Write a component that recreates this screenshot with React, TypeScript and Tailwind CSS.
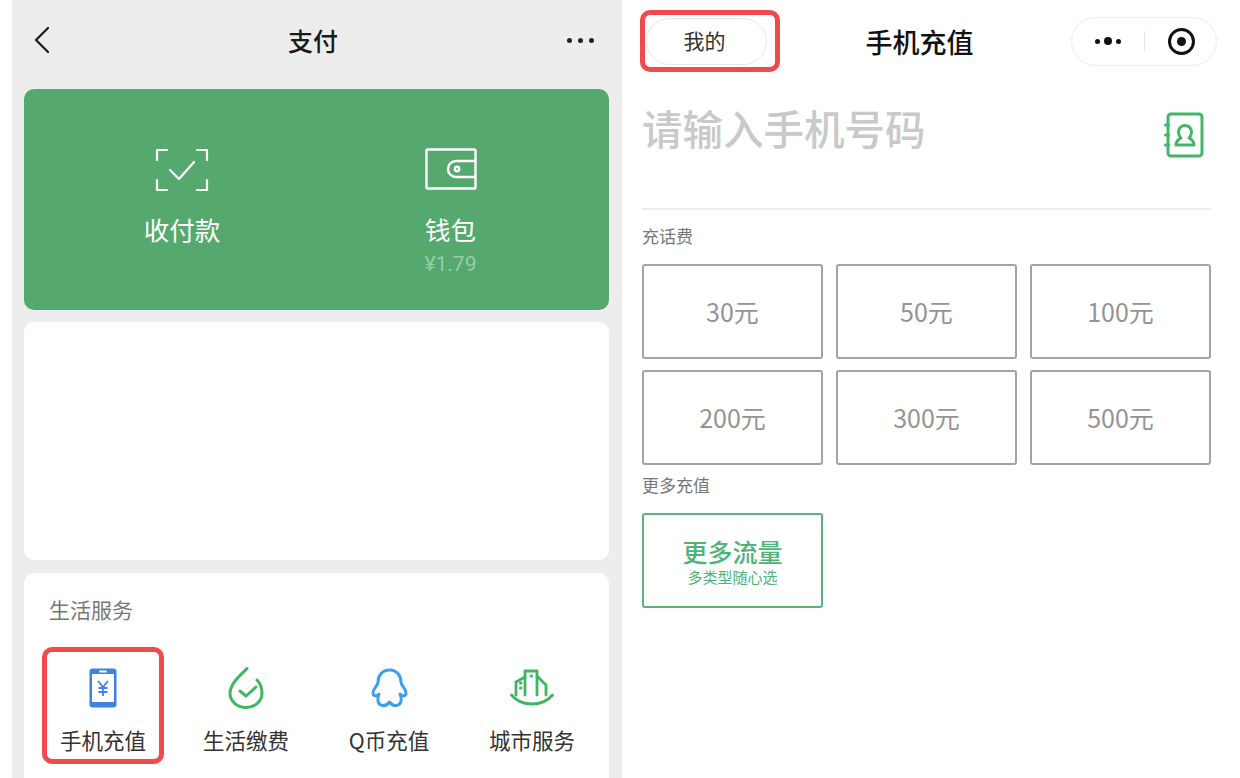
import type { ReactNode } from 'react';

const amounts = ['30元', '50元', '100元', '200元', '300元', '500元'];

function ScanIcon() {
  return (
    <svg width="54" height="44" viewBox="0 0 54 44" fill="none" stroke="#fff" strokeWidth="2.2" strokeLinecap="round" strokeLinejoin="round">
      <path d="M12 2H2v10M42 2h10v10M2 32v10h10M52 32v10H42" />
      <path d="M15 22l9 9 15-17" />
    </svg>
  );
}

function WalletIcon() {
  return (
    <svg width="52" height="42" viewBox="0 0 52 42" fill="none" stroke="#fff" strokeWidth="2.4" strokeLinejoin="round">
      <rect x="1.5" y="1.5" width="49" height="39" rx="1" />
      <path d="M50 13H31a8 8 0 0 0 0 16h19" />
      <circle cx="32" cy="21" r="2.2" />
    </svg>
  );
}

function PhoneIcon() {
  return (
    <svg width="28" height="40" viewBox="0 0 28 40">
      <rect x="0.5" y="0.5" width="27" height="39" rx="3" fill="#3f82e0" />
      <rect x="3" y="6" width="22" height="28" fill="#fff" />
      <rect x="10" y="2.500" width="8" height="2" rx="1" fill="#fff" />
      <path d="M9 13l5 6 5-6M14 19v9M9.500 20h9M9.500 24h9" fill="none" stroke="#3f82e0" strokeWidth="1.8" />
    </svg>
  );
}

function BillIcon() {
  return (
    <svg width="36" height="42" viewBox="0 0 36 42" fill="none" stroke="#3fb565" strokeWidth="3" strokeLinecap="round" strokeLinejoin="round">
      <path d="M19 1.500C13 8 2 16 2 26.500a16 14 0 0 0 32 0C34 21 32 16 29 13" />
      <path d="M12 24l6 5 10-9" />
    </svg>
  );
}

function PenguinIcon() {
  return (
    <svg width="37" height="40" viewBox="0 0 37 40" fill="none" stroke="#3f9fec" strokeWidth="3" strokeLinecap="round" strokeLinejoin="round">
      <path d="M18.500 2C11 2 7 8 7 14c0 4-5 6-5 11 0 3 3 4 6 1-2 4-2 11 4 11.500 3 .5 5-1.500 6.500-3.500 1.500 2 3.500 4 6.500 3.500C31 37 31 30 29 26c3 3 6 2 6-1 0-5-5-7-5-11 0-6-4-12-11.500-12z" />
    </svg>
  );
}

function CityIcon() {
  return (
    <svg width="44" height="38" viewBox="0 0 44 38" fill="none" stroke="#3fb565" strokeWidth="2.800" strokeLinecap="round" strokeLinejoin="round">
      <path d="M1.500 26c5 6 12 9 20.500 9s15.500-3 20.500-9" />
      <path d="M6 26V13l9-5v18" />
      <path d="M15 9V2h12v24" />
      <path d="M27 7l9 9v10" />
      <path d="M10.500 14h.5M10.500 19h.5M21 7h.5" strokeWidth="3" />
    </svg>
  );
}

function ContactsIcon() {
  return (
    <svg width="40" height="46" viewBox="0 0 40 46" fill="none" stroke="#46b56c" strokeWidth="3" strokeLinecap="round" strokeLinejoin="round">
      <rect x="4" y="2" width="34" height="42" rx="3" />
      <path d="M1.500 13h3M1.500 23h3M1.500 33h3" />
      <path d="M12 33c0-4 3-6 5-7-2-2-2.500-4-2.500-6a6.500 6.500 0 0 1 13 0c0 2-.5 4-2.500 6 2 1 5 3 5 7z" />
    </svg>
  );
}

function ServiceItem({ icon, label, highlighted }: { icon: ReactNode; label: string; highlighted?: boolean }) {
  return (
    <div
      className={`flex h-[117px] w-[122px] shrink-0 flex-col items-center rounded-[10px] border-[5px] pt-[15px] ${
        highlighted ? 'border-[#ef4a4e]' : 'border-transparent'
      }`}
    >
      <div className="flex h-[42px] items-center">{icon}</div>
      <div className="mt-[16px] text-[21.500px] leading-[30px] text-[#333]">{label}</div>
    </div>
  );
}

export default function App() {
  return (
    <div className="flex h-[778px] w-[1240px] overflow-hidden bg-white font-['Noto_Sans_CJK_SC',sans-serif]">
      {/* left screenshot */}
      <div className="ml-3 flex w-[609px] shrink-0 flex-col bg-[#ededed] px-3">
        <div className="grid h-[89px] shrink-0 grid-cols-[1fr_auto_1fr] items-center pb-[9px] pl-[10px] pr-[17px]">
          <svg width="16" height="28" viewBox="0 0 16 28" fill="none" stroke="#222" strokeWidth="2.4" strokeLinecap="round" strokeLinejoin="round">
            <path d="M14 2L2 14l12 12" />
          </svg>
          <span className="text-[25px] font-medium leading-none text-[#1a1a1a]">支付</span>
          <div className="-mr-[2px] flex justify-end gap-[6px]">
            <i className="h-[5px] w-[5px] rounded-full bg-[#222]" />
            <i className="h-[5px] w-[5px] rounded-full bg-[#222]" />
            <i className="h-[5px] w-[5px] rounded-full bg-[#222]" />
          </div>
        </div>

        <div className="grid h-[221px] w-[585px] shrink-0 grid-cols-2 rounded-[10px] bg-[#56a96e] pl-6 pr-[25px] pt-[59px] text-white">
          <div className="flex flex-col items-center">
            <ScanIcon />
            <div className="mt-[19px] text-[25.500px] leading-[36px]">收付款</div>
          </div>
          <div className="flex flex-col items-center pl-px">
            <WalletIcon />
            <div className="mt-[21px] text-[25.500px] leading-[36px]">钱包</div>
            <div className="mt-[3px] font-['Roboto',sans-serif] text-[21px] leading-[28px] text-[#96cda6]">¥1.79</div>
          </div>
        </div>

        <div className="mt-3 h-[238px] w-[585px] shrink-0 rounded-[10px] bg-white" />

        <div className="mt-[13px] h-[230px] w-[585px] shrink-0 rounded-t-[10px] bg-white pl-[18px] pt-[21px]">
          <div className="pl-[7px] text-[21px] leading-[30px] text-[#777]">生活服务</div>
          <div className="mt-[23px] flex gap-[21px]">
            <ServiceItem icon={<PhoneIcon />} label="手机充值" highlighted />
            <ServiceItem icon={<BillIcon />} label="生活缴费" />
            <ServiceItem icon={<PenguinIcon />} label="Q币充值" />
            <ServiceItem icon={<CityIcon />} label="城市服务" />
          </div>
        </div>
      </div>

      {/* right screenshot */}
      <div className="flex min-w-0 flex-1 flex-col border-l border-[#ececec] pl-5 pr-[29px]">
        <div className="mt-[10px] flex h-[62px] shrink-0 items-center justify-between">
          <div className="-ml-[2px] flex h-[62px] w-[140px] items-center rounded-[10px] border-[5px] border-[#ef4a4e] pl-px">
            <div className="flex h-[47px] w-[121px] shrink-0 items-center justify-center rounded-full border border-[#e6e6e6] pr-1 text-[21px] text-[#333]">
              我的
            </div>
          </div>
          <span className="mr-3 text-[27px] font-medium leading-none text-[#111]">手机充值</span>
          <div className="-mr-[6px] flex h-[49px] w-[146px] items-center rounded-full border border-[#ececec]">
            <div className="flex w-[72px] items-center justify-center gap-[4px]">
              <i className="h-[5px] w-[5px] rounded-full bg-[#111]" />
              <i className="h-[8px] w-[8px] rounded-full bg-[#111]" />
              <i className="h-[5px] w-[5px] rounded-full bg-[#111]" />
            </div>
            <div className="h-[20px] w-px bg-[#e6e6e6]" />
            <div className="flex flex-1 items-center justify-center pl-[2px]">
              <div className="flex h-[27px] w-[27px] items-center justify-center rounded-full border-[3.500px] border-[#111]">
                <i className="h-[9px] w-[9px] rounded-full bg-[#111]" />
              </div>
            </div>
          </div>
        </div>

        <div className="flex h-[138px] shrink-0 items-start justify-between border-b-2 border-[#eeeeee] pt-[26px]">
          <span className="text-[40.500px] font-medium leading-[60px] text-[#c9c9c9]">请输入手机号码</span>
          <div className="mr-[7px] mt-[14px]">
            <ContactsIcon />
          </div>
        </div>

        <div className="mt-3 text-[17px] leading-[28px] text-[#777]">充话费</div>
        <div className="mt-[14px] grid grid-cols-3 gap-x-[13px] gap-y-[11px]">
          {amounts.map(a => (
            <div
              key={a}
              className="flex h-[95px] items-center justify-center rounded-[3px] border-2 border-[#a3a3a3] text-[25px] text-[#949494]"
            >
              {a}
            </div>
          ))}
        </div>

        <div className="mt-[6px] text-[17px] leading-[28px] text-[#777]">更多充值</div>
        <div className="mt-[14px] flex h-[95px] w-[181px] flex-col items-center justify-center rounded-[3px] border-2 border-[#57b57c] text-[#4fb377]">
          <div className="text-[25px] font-medium leading-[32px]">更多流量</div>
          <div className="text-[15px] leading-[20px]">多类型随心选</div>
        </div>
      </div>
    </div>
  );
}
